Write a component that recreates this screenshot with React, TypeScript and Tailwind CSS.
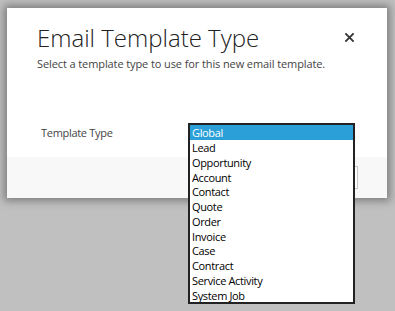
import React from 'react';

const options = [
  'Global',
  'Lead',
  'Opportunity',
  'Account',
  'Contact',
  'Quote',
  'Order',
  'Invoice',
  'Case',
  'Contract',
  'Service Activity',
  'System Job',
];

const App: React.FC = () => {
  return (
    <div
      className="w-[395px] h-[311px] overflow-hidden bg-[#c0c0c0] pt-[8px] pl-[7px]"
      style={{ fontFamily: '"Open Sans", "Noto Sans", Arial, sans-serif' }}
    >
      {/* Dialog */}
      <div className="w-[380px] h-[190px] bg-white flex flex-col shadow-[0_0_8px_3px_rgba(0,0,0,0.35)]">
        <div className="flex justify-between pl-[30px] pr-[31px] pt-[15px]">
          <div>
            <h1 className="text-[24px] font-light leading-[30px] text-[#222]">Email Template Type</h1>
            <p className="text-[11px] leading-[16px] text-[#444] tracking-[-0.1px] mt-[3px]">
              Select a template type to use for this new email template.
            </p>
          </div>
          <button className="w-[12px] h-[12px] mt-[8px] text-[#333]">
            <svg viewBox="0 0 12 12" className="w-[11px] h-[11px]">
              <path d="M1.5 1.5 L10.5 10.5 M10.5 1.5 L1.5 10.5" stroke="currentColor" strokeWidth="2" />
            </svg>
          </button>
        </div>

        <div className="flex items-start pl-[34px] mt-[53px] h-[16px]">
          <div className="w-[147px] text-[11px] leading-[16px] tracking-[-0.3px] text-[#444]">Template Type</div>
          {/* Open dropdown list */}
          <div className="relative">
            <div className="absolute left-0 -top-[2px] w-[167px] h-[181px] border-2 border-[#222] bg-white overflow-hidden z-10">
              {options.map((opt, i) => (
                <div
                  key={opt}
                  className={
                    i === 0
                      ? 'h-[15px] leading-[15px] pl-[2px] text-[11px] tracking-[-0.35px] bg-[#2a9fd8] text-white'
                      : 'h-[14.75px] leading-[15px] pl-[2px] text-[11px] tracking-[-0.35px] text-black'
                  }
                >
                  {opt}
                </div>
              ))}
            </div>
          </div>
        </div>

        <div className="mt-auto h-[41px] bg-[#f8f8f8] flex items-center justify-end pr-[29px]">
          <div className="w-[60px] h-[23px] bg-white border border-[#c6c6c6]" />
        </div>
      </div>
    </div>
  );
};

export default App;
